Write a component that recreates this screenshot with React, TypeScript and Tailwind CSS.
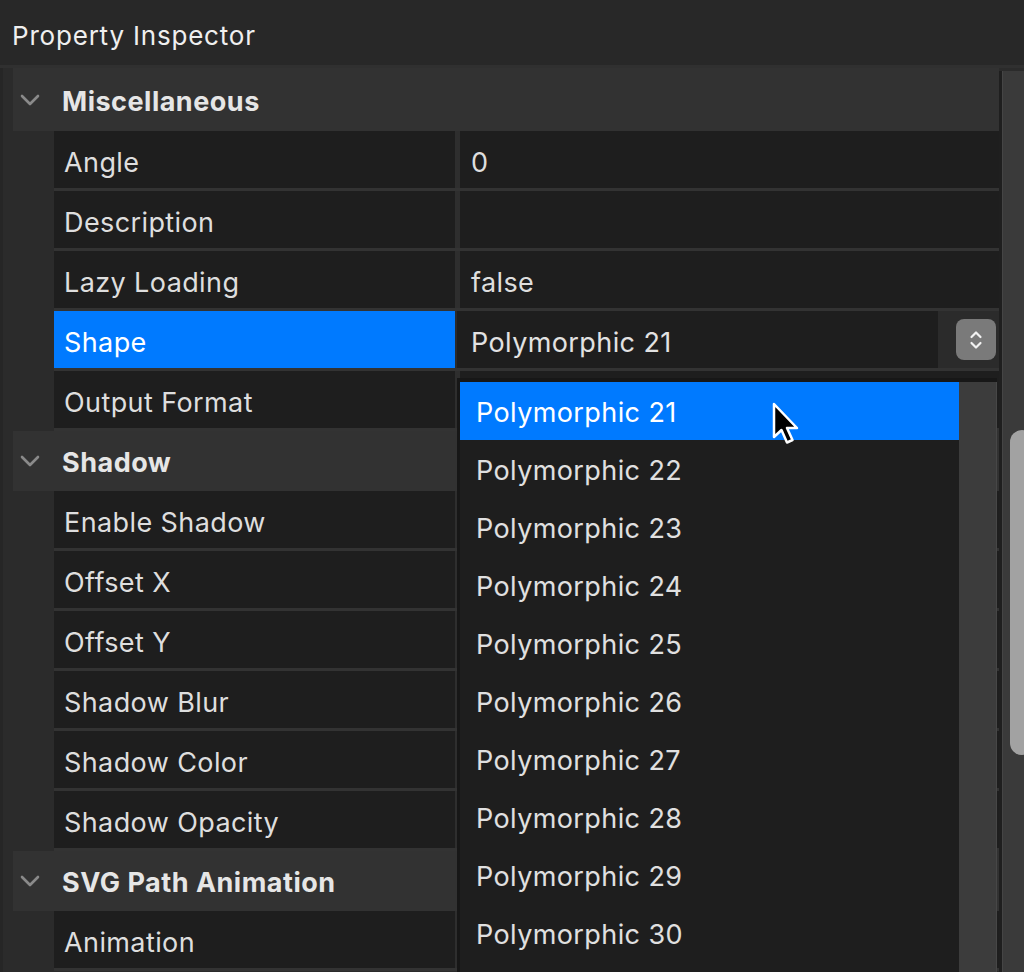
import React from 'react';

type Row = { label: string; value?: string };

const misc: Row[] = [
  { label: 'Angle', value: '0' },
  { label: 'Description', value: '' },
  { label: 'Lazy Loading', value: 'false' },
  { label: 'Shape' },
  { label: 'Output Format', value: '' },
];

const shadow: Row[] = [
  { label: 'Enable Shadow' },
  { label: 'Offset X' },
  { label: 'Offset Y' },
  { label: 'Shadow Blur' },
  { label: 'Shadow Color' },
  { label: 'Shadow Opacity' },
];

const options = Array.from({ length: 10 }, (_, i) => `Polymorphic ${21 + i}`);

function Chevron() {
  return (
    <svg width="20" height="12" viewBox="0 0 20 12" fill="none">
      <polyline points="2,2 10,10 18,2" stroke="#8a8a8a" strokeWidth="2.6" strokeLinecap="round" strokeLinejoin="round" />
    </svg>
  );
}

function SectionHeader({ title, first }: { title: string; first?: boolean }) {
  return (
    <div className={`${first ? 'h-[63px]' : 'h-[60px]'} ml-[10px] bg-[#323232] flex items-center pl-[7px]`}>
      <Chevron />
      <span className="ml-[22px] text-[27px] tracking-[0.5px] font-bold text-[#e6e6e6] pt-[5px]">{title}</span>
    </div>
  );
}

function DataRow({ row }: { row: Row }) {
  if (row.label === 'Shape') {
    return (
      <div className="ml-[51px] h-[60px] flex border-b-[3px] border-[#333]">
        <div className="w-[401px] bg-[#007aff] flex items-center pl-[10px] text-[27px] tracking-[0.4px] text-white pt-[7px]">
          {row.label}
        </div>
        <div className="flex-1 bg-[#2b2b2b] flex pl-[2px]">
          <div className="flex-1 bg-[#1e1e1e] flex items-center pl-[14px] text-[27px] tracking-[0.4px] text-[#e2e2e2] pt-[7px]">
            Polymorphic 21
          </div>
          <div className="w-[61px] flex items-center justify-end pr-[3px]">
            <div className="w-[40px] h-[41px] rounded-[8px] bg-[#7a7a7a] flex items-center justify-center">
              <svg width="16" height="26" viewBox="0 0 16 26" fill="none">
                <polyline points="3.5,10 8,5.5 12.5,10" stroke="#f2f2f2" strokeWidth="2.2" strokeLinecap="round" strokeLinejoin="round" />
                <polyline points="3.5,16 8,20.5 12.5,16" stroke="#f2f2f2" strokeWidth="2.2" strokeLinecap="round" strokeLinejoin="round" />
              </svg>
            </div>
          </div>
        </div>
      </div>
    );
  }
  return (
    <div className="ml-[51px] h-[60px] flex border-b-[3px] border-[#333]">
      <div className="w-[401px] bg-[#1e1e1e] flex items-center pl-[10px] text-[27px] tracking-[0.4px] text-[#dedede] pt-[7px]">
        {row.label}
      </div>
      <div className="w-[5px] bg-[#2e2e2e]" />
      <div className="flex-1 bg-[#1e1e1e] flex items-center pl-[11px] text-[27px] tracking-[0.4px] text-[#dedede] pt-[7px]">
        {row.value}
      </div>
    </div>
  );
}

export default function App() {
  return (
    <div className="relative w-[1024px] h-[972px] overflow-hidden bg-[#2b2b2b] font-['Inter','Noto_Sans',sans-serif]">
      <div className="h-[65px] bg-[#282828] flex items-center pl-[12px] pt-[5px]">
        <span className="text-[26px] tracking-[0.8px] text-[#efefef]">Property Inspector</span>
      </div>
      <div className="h-[3px] bg-[#303030]" />

      <div className="flex h-[904px]">
        <div className="w-[999px] border-l-[3px] border-[#262626] bg-[#2b2b2b] overflow-hidden">
          <SectionHeader title="Miscellaneous" first />
          {misc.map((r) => (
            <DataRow key={r.label} row={r} />
          ))}
          <SectionHeader title="Shadow" />
          {shadow.map((r) => (
            <DataRow key={r.label} row={r} />
          ))}
          <SectionHeader title="SVG Path Animation" />
          <DataRow row={{ label: 'Animation' }} />
        </div>
        <div className="w-[3px] bg-[#1f1f1f] mt-[3px]" />
        <div className="w-[22px] bg-[#3a3a3a] border-l-[1px] border-[#454545] mt-[3px] overflow-hidden">
          <div className="mt-[359px] ml-[7px] w-[24px] h-[325px] rounded-full bg-[#a2a2a2]" />
        </div>
      </div>

      {/* open dropdown */}
      <div className="absolute left-[457px] top-[378px] w-[540px] h-[600px] bg-[#171717] pl-[3px] pt-[4px] flex">
        <div className="w-[499px] bg-[#1e1e1e]">
          {options.map((o, i) => (
            <div
              key={o}
              className={`h-[58px] flex items-center pl-[16px] text-[27px] tracking-[0.4px] pt-[5px] ${
                i === 0 ? 'bg-[#007aff] text-white' : 'text-[#e0e0e0]'
              }`}
            >
              {o}
            </div>
          ))}
        </div>
        <div className="w-[38px] bg-[#3c3c3c] border-r-[1px] border-[#474747]" />
      </div>

      {/* mouse pointer */}
      <svg className="absolute left-[771px] top-[401px]" width="32" height="48" viewBox="0 0 32 48">
        <path
          d="M3 3 L3 36 L10.5 29 L16 41.5 L21.5 39 L16 27 L26 27 Z"
          fill="#000"
          stroke="#fff"
          strokeWidth="2.5"
          strokeLinejoin="round"
        />
      </svg>
    </div>
  );
}
